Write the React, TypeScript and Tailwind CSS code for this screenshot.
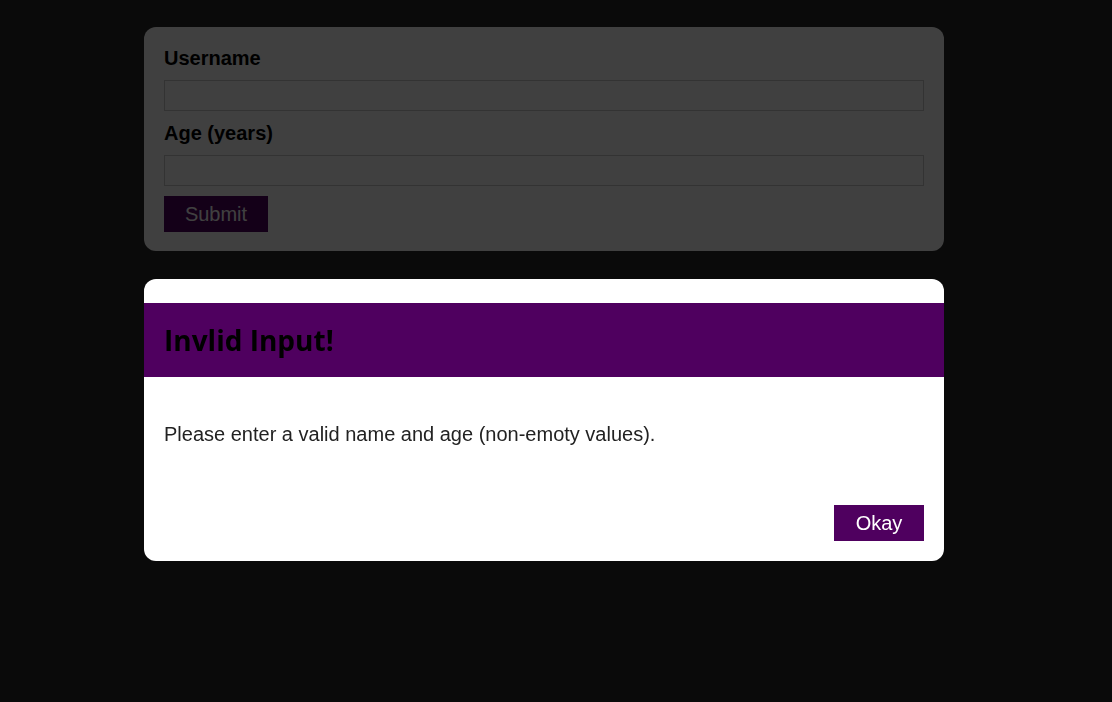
import React from "react";

const arial = { fontFamily: '"Liberation Sans", Arial, sans-serif' };

const App = () => {
  return (
    <div className="min-h-screen bg-[#292929] pt-[27px]" style={arial}>
      <div className="ml-[144px] w-[800px] rounded-xl bg-white px-5 pt-5 pb-[19px]">
        <form>
          <label className="block h-[23px] text-[20px] leading-[23px] font-bold text-black">
            Username
          </label>
          <input
            type="text"
            className="mt-[10px] block h-[31px] w-full border border-[#ccc] px-2 outline-none"
          />
          <label className="mt-[11px] block h-[23px] text-[20px] leading-[23px] font-bold text-black">
            Age (years)
          </label>
          <input
            type="number"
            className="mt-[10px] block h-[31px] w-full border border-[#ccc] px-2 outline-none"
          />
          <button
            type="submit"
            className="mt-[10px] h-[36px] w-[104px] bg-[#4f005f] text-[20px] text-white"
          >
            Submit
          </button>
        </form>
      </div>

      <div className="fixed inset-0 bg-black/75">
        <div className="ml-[144px] mt-[279px] w-[800px] overflow-hidden rounded-xl bg-white pt-6">
          <header className="flex h-[74px] items-center bg-[#4f005f] px-5">
            <h2
              className="text-[28px] font-bold text-black"
              style={{ fontFamily: '"Open Sans", "Noto Sans", sans-serif' }}
            >
              Invlid Input!
            </h2>
          </header>
          <div className="px-5 pt-[46px]">
            <p className="text-[20px] leading-[23px] text-[#222]">
              Please enter a valid name and age (non-emoty values).
            </p>
          </div>
          <footer className="flex justify-end px-5 pt-[59px] pb-5">
            <button className="h-[36px] w-[90px] bg-[#4f005f] text-[20px] text-white">
              Okay
            </button>
          </footer>
        </div>
      </div>
    </div>
  );
};

export default App;
